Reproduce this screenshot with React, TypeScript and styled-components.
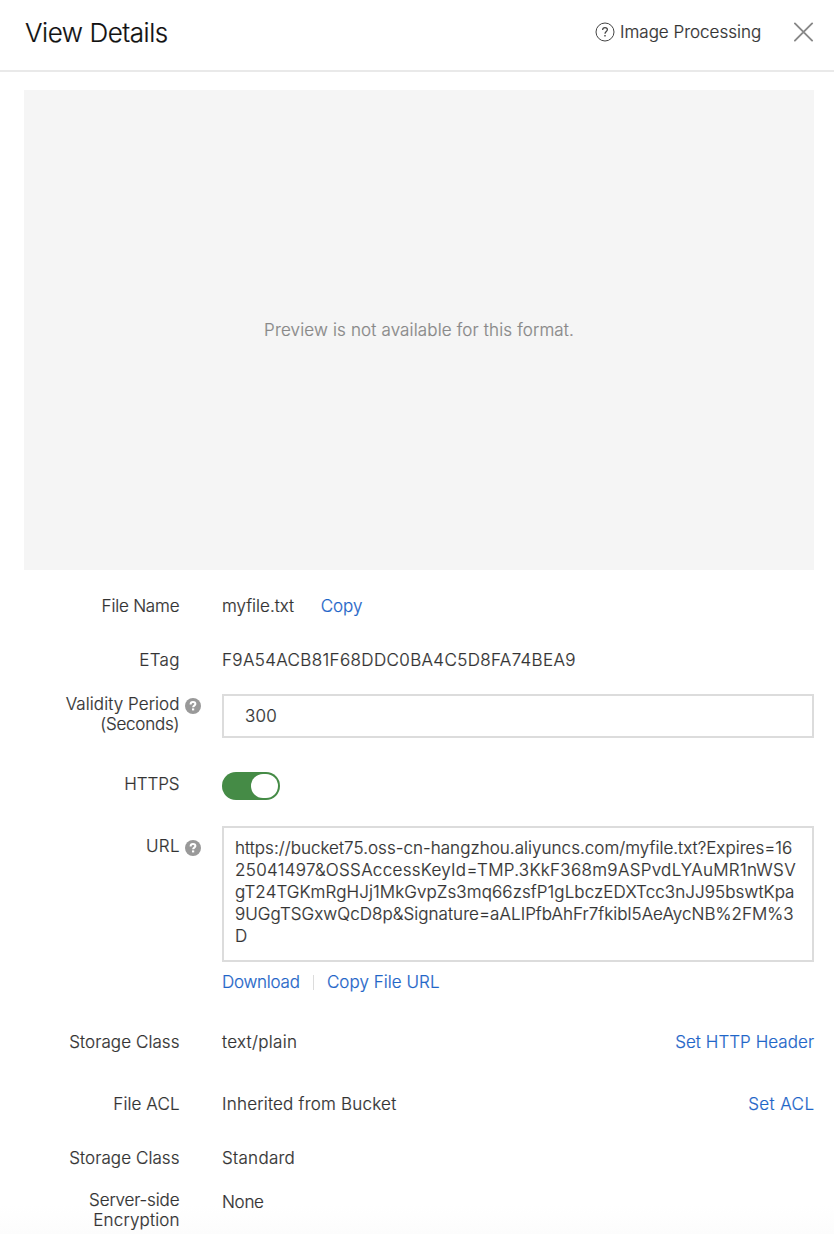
import React from 'react';
import styled, { createGlobalStyle } from 'styled-components';

const GlobalStyle = createGlobalStyle`
  * { box-sizing: border-box; }
  body {
    margin: 0;
    background: #fff;
    color: #333;
    font-family: Inter, "Liberation Sans", sans-serif;
    font-size: 17px;
    font-weight: 300;
    line-height: 20px;
    -webkit-text-stroke: 0.2px currentColor;
    overflow: hidden;
  }
`;

const Panel = styled.main`
  width: 834px;
  height: 1234px;
  overflow: hidden;
  background: linear-gradient(to bottom, #fff 1205px, #fcfcfc 1234px);
`;

const Header = styled.header`
  display: flex;
  align-items: center;
  height: 72px;
  padding: 0 20px 6px 25px;
  border-bottom: 2px solid #e9e9e9;
`;

const Title = styled.h1<{ $ls: number }>`
  margin: 0 auto 0 0;
  padding-top: 2px;
  color: #111;
  font-size: 26px;
  font-weight: 300;
  line-height: 32px;
  white-space: nowrap;
  letter-spacing: ${p => p.$ls}px;
`;

const Help = styled.a`
  display: flex;
  align-items: center;
  gap: 5.5px;
  width: 199.5px;
`;

const Preview = styled.section`
  display: flex;
  align-items: center;
  justify-content: center;
  height: 480px;
  margin: 18px 20px 0 24px;
  background: #f5f5f5;
  color: #888;
`;

const Details = styled.section`
  padding: 26px 20px 0 24px;
`;

const Row = styled.div<{ $h: number }>`
  display: grid;
  grid-template-columns: 156px 42px 592px;
  align-items: start;
  height: ${p => p.$h}px;
`;

const Label = styled.div<{ $top?: number }>`
  padding-top: ${p => p.$top ?? 0}px;
  padding-right: 0.5px;
  text-align: right;
`;

const Hint = styled.div<{ $top: number }>`
  padding: ${p => p.$top}px 0 0 5px;
  line-height: 0;
`;

const Value = styled.div<{ $gap?: number; $between?: boolean; $top?: number }>`
  display: flex;
  align-items: center;
  padding-top: ${p => p.$top ?? 0}px;
  gap: ${p => p.$gap ?? 0}px;
  justify-content: ${p => (p.$between ? 'space-between' : 'flex-start')};
`;

const Text = styled.span<{ $ls?: number; $block?: boolean }>`
  display: ${p => (p.$block ? 'block' : 'inline-block')};
  letter-spacing: ${p => p.$ls ?? 0}px;
  margin-right: ${p => -(p.$ls ?? 0)}px;
  white-space: nowrap;
`;

const Link = styled(Text)`
  color: #1f66c8;
`;

const Input = styled.div`
  height: 44px;
  padding: 10px 21px;
  border: 2px solid #dcdcdc;
`;

const UrlBox = styled.div`
  height: 136px;
  padding: 9px 11px;
  border: 2px solid #dcdcdc;
  line-height: 22px;
`;

const Divider = styled.i`
  width: 1px;
  height: 15px;
  background: #dcdcdc;
`;

const Switch = styled.div`
  display: flex;
  justify-content: flex-end;
  width: 58px;
  height: 28px;
  padding: 2px;
  border-radius: 14px;
  background: #458b46;
`;

const Knob = styled.div`
  width: 27px;
  height: 24px;
  border-radius: 12px;
  background: #fff;
`;

const InfoIcon = () => (
  <svg width="16" height="16" viewBox="0 0 16 16">
    <circle cx="8" cy="8" r="8" fill="#999" />
    <path d="M5.6 6.4C5.6 4.9 6.6 4 8 4s2.4.8 2.4 2c0 1.6-2.3 1.6-2.3 3.2" fill="none" stroke="#fff" strokeWidth="2" />
    <rect x="7" y="10.4" width="2.2" height="2" fill="#fff" />
  </svg>
);

const HelpIcon = () => (
  <svg width="20" height="20" viewBox="0 0 20 20" fill="none" stroke="#444">
    <circle cx="10" cy="10" r="9" strokeWidth="1" />
    <path d="M7.6 8.1C7.6 6.5 8.6 5.7 10 5.7s2.4.8 2.4 2.1c0 1.6-2.4 2-2.4 3.9" strokeWidth="1.2" />
    <path d="M10 13.1v1.4" strokeWidth="1.4" />
  </svg>
);

const CloseIcon = () => (
  <svg width="20" height="20" viewBox="0 0 20 20" fill="none" stroke="#888" strokeWidth="1.9" strokeLinecap="round">
    <path d="M.9 1.4l17.2 17.2M18.1 1.4L.9 18.6" />
  </svg>
);

const URL_LINES: [string, number][] = [
  ['https://bucket75.oss-cn-hangzhou.aliyuncs.com/myfile.txt?Expires=16', 0.03],
  ['25041497&OSSAccessKeyId=TMP.3KkF368m9ASPvdLYAuMR1nWSV', 0.31],
  ['gT24TGKmRgHJj1MkGvpZs3mq66zsfP1gLbczEDXTcc3nJJ95bswtKpa', 0.09],
  ['9UGgTSGxwQcD8p&Signature=aALIPfbAhFr7fkibl5AeAycNB%2FM%3', 0.05],
  ['D', 0],
];

export default function App() {
  return (
    <Panel>
      <GlobalStyle />
      <Header>
        <Title $ls={-0.45}>View Details</Title>
        <Help>
          <HelpIcon />
          <Text>Image Processing</Text>
        </Help>
        <CloseIcon />
      </Header>
      <Preview>
        <Text $ls={0.15}>Preview is not available for this format.</Text>
      </Preview>
      <Details>
        <Row $h={54}>
          <Label><Text $ls={-0.2}>File Name</Text></Label>
          <span />
          <Value $gap={26.5}>
            <Text>myfile.txt</Text>
            <Link>Copy</Link>
          </Value>
        </Row>
        <Row $h={44}>
          <Label><Text $ls={0.3}>ETag</Text></Label>
          <span />
          <Value><Text $ls={0.37}>F9A54ACB81F68DDC0BA4C5D8FA74BEA9</Text></Value>
        </Row>
        <Row $h={78}>
          <Label>
            <Text $block $ls={0.08}>Validity Period</Text>
            <Text $block $ls={-0.22}>(Seconds)</Text>
          </Label>
          <Hint $top={4}><InfoIcon /></Hint>
          <Input><Text $ls={0.2}>300</Text></Input>
        </Row>
        <Row $h={54}>
          <Label $top={2}><Text $ls={-0.1}>HTTPS</Text></Label>
          <span />
          <Switch><Knob /></Switch>
        </Row>
        <Row $h={146}>
          <Label $top={10}><Text $ls={0.3}>URL</Text></Label>
          <Hint $top={14}><InfoIcon /></Hint>
          <UrlBox>
            {URL_LINES.map(([line, ls]) => (
              <Text key={line} $block $ls={ls}>{line}</Text>
            ))}
          </UrlBox>
        </Row>
        <Row $h={60}>
          <span />
          <span />
          <Value $gap={13}>
            <Link $ls={-0.25}>Download</Link>
            <Divider />
            <Link $ls={0.05}>Copy File URL</Link>
          </Value>
        </Row>
        <Row $h={62}>
          <Label><Text $ls={0.08}>Storage Class</Text></Label>
          <span />
          <Value $between>
            <Text $ls={0.3}>text/plain</Text>
            <Link $ls={0.04}>Set HTTP Header</Link>
          </Value>
        </Row>
        <Row $h={54}>
          <Label><Text $ls={0.1}>File ACL</Text></Label>
          <span />
          <Value $between>
            <Text $ls={0.22}>Inherited from Bucket</Text>
            <Link $ls={0.4}>Set ACL</Link>
          </Value>
        </Row>
        <Row $h={42}>
          <Label><Text $ls={0.08}>Storage Class</Text></Label>
          <span />
          <Value><Text $ls={0.28}>Standard</Text></Value>
        </Row>
        <Row $h={44}>
          <Label>
            <Text $block $ls={-0.15}>Server-side</Text>
            <Text $block $ls={0.15}>Encryption</Text>
          </Label>
          <span />
          <Value $top={2}><Text $ls={-0.3}>None</Text></Value>
        </Row>
      </Details>
    </Panel>
  );
}
